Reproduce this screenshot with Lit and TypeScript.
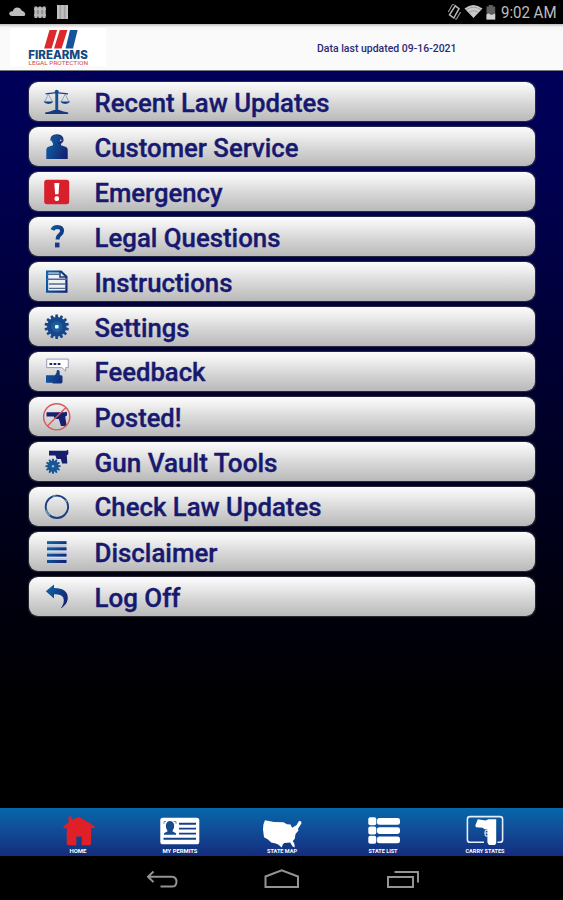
import { LitElement, html, svg, css, TemplateResult } from "lit";
import { customElement } from "lit/decorators.js";
import { classMap } from "lit/directives/class-map.js";

/** Polygon points of a cog centred on (cx, cy). */
const cog = (cx: number, cy: number, outer: number, inner: number, teeth: number) => {
  const pts: string[] = [];
  for (let i = 0; i < teeth; i++) {
    const step = (Math.PI * 2) / teeth;
    const a = i * step - Math.PI / 2;
    for (const [r, d] of [[inner, -0.36], [outer, -0.22], [outer, 0.22], [inner, 0.36]]) {
      pts.push(`${(cx + r * Math.cos(a + d * step)).toFixed(2)},${(cy + r * Math.sin(a + d * step)).toFixed(2)}`);
    }
  }
  return pts.join(" ");
};

const grad = svg`<defs><linearGradient id="g" gradientUnits="userSpaceOnUse" x1="4" y1="14" x2="27" y2="24">
  <stop offset="0" stop-color="#0d62a6"/><stop offset="1" stop-color="#15206f"/></linearGradient></defs>`;

// Every row icon is drawn on a 30 x 39 grid, the full height of its row.
const rows: { label: string; raised?: boolean; width: number; icon: TemplateResult<2> }[] = [
  { label: "Recent Law Updates", width: 235, icon: svg`
    <path d="M3.600 11.800 L8 11.300 14.600 10.600 21 11.300 26 11.800" fill="none" stroke="#14418a" stroke-width="1.300"/>
    <rect x="13.300" y="9" width="2.900" height="21" fill="#17508f"/><circle cx="14.700" cy="9.600" r="1.900" fill="#174a8d"/>
    <path d="M6.400 12 2.500 20M6.400 12 10.400 20M23.200 12 19.200 20M23.200 12 27 20" stroke="#6f8fb8" stroke-width=".7"/>
    <path d="M1.500 19.600h10q-1.500 2.400-5 2.400t-5-2.400zM18.200 19.600h10q-1.500 2.400-5 2.400t-5-2.400z" fill="#14418a"/>
    <path d="M3.200 32v-1.600q5-.5 9-2.400h5q4 1.900 9 2.400V32z" fill="#16397f"/>` },
  { label: "Customer Service", width: 204, icon: svg`
    <path d="M4.300 32V23q0-2.800 3-3.500l3.700-1.200V16.500q-1.800-2-1.800-4.500Q9.500 8.300 15 8.300t5.800 3.700q0 2.500-1.800 4.500v1.800l3.700 1.200q3 .7 3 3.500V32z" fill="url(#g)"/>
    <path d="M9 13.600q-.5-5.600 6-5.700 6.300.2 6 5.700l-1.400 2.200-3.800.6" fill="none" stroke="#142a70" stroke-width="1.200"/>
    <circle cx="18.700" cy="13.300" r=".9" fill="#d7a0b4"/>` },
  { label: "Emergency", width: 128, icon: svg`
    <rect x="2.200" y="7.700" width="25" height="24.600" rx="2.800" fill="#d8202c"/>
    <path d="M12.300 11h5l-.8 11.300h-3.400z" fill="#fff"/><rect x="12.600" y="24.300" width="4.400" height="4.600" rx="1.600" fill="#fff"/>` },
  { label: "Legal Questions", width: 186, icon: svg`
    <path d="M10.400 12.900q1.200-3 5-3 4.700.2 4.700 3.900 0 2.300-2.500 4.200-2 1.500-2 4.600" fill="none" stroke="url(#g)" stroke-width="4"/>
    <rect x="13" y="25.600" width="4.500" height="4.800" fill="#17378b"/>` },
  { label: "Instructions", width: 138, icon: svg`
    <path d="M5.100 9.500H19l5.400 5.300v14.800H5.100z" fill="#eef0f4" stroke="url(#g)" stroke-width="2.200"/>
    <path d="M18 9v6h7" fill="none" stroke="#183678" stroke-width="1.500"/>
    <path d="M5 12.200h12M5 17.200h20M7 22h16M7 26.400h16" stroke="#526993" stroke-width="1.400"/>` },
  { label: "Settings", width: 95, icon: svg`
    <polygon points=${cog(14.700, 19.700, 12.300, 9.600, 14)} fill="#17478a"/>
    <circle cx="14.700" cy="19.700" r="5.500" fill="#195f9f"/><rect x="13" y="18" width="3.600" height="3.600" rx=".8" fill="#f3f3f3"/>` },
  { label: "Feedback", raised: true, width: 111, icon: svg`
    <path d="M4.700 7.100h21.600v8.500h-2.600v3.600l-3.800-3.600H4.700z" fill="#fff" stroke="#8b91ad" stroke-width=".9"/>
    <path d="M7.500 12h12" stroke="#1b2470" stroke-width="2.200" stroke-dasharray="2.700 1.400"/>
    <path d="M4 23.300h9q1.800-1.600 2-5.300 2.700-.5 2.700 1.700v3.600h1.500q1.300.3 1.300 1.500v5q0 1.700-1.700 1.700H11l-1-.8H4z" fill="url(#g)"/>` },
  { label: "Posted!", width: 87, icon: svg`
    <path d="M4.500 15.200h18.500l1-.8 1 1v3l-1.800 1.200 1.300 8.300-1 1H19l-2.200-7h-4l-1-2.400H4.500z" fill="#17216f"/>
    <circle cx="14.700" cy="19.800" r="13.100" fill="none" stroke="#d8585b" stroke-width="1.400"/>
    <path d="M23.700 10.800 5.500 29" stroke="#d8585b" stroke-width="1.300"/>` },
  { label: "Gun Vault Tools", width: 183, icon: svg`
    <path d="M7 8.800h17.500l1-1 .8 1v3.500l-1.500 1 .5 8.200h-5.200l-1.300-4.500h-4l-1.500-3.500H7z" fill="#171e6c"/>
    <polygon points=${cog(11, 24.200, 7.600, 5.600, 12)} fill="#175694"/>
    <circle cx="11" cy="24.200" r="1.200" fill="#9db9d3"/>` },
  { label: "Check Law Updates", raised: true, width: 227, icon: svg`
    <circle cx="14.900" cy="19.800" r="11.200" fill="none" stroke="#1b3d82" stroke-width="1.900"/>
    <path d="M4.200 22.700q1 3.700 3.700 5.700M23.600 12.800l1.500 2M10.800 9.400l2.800-.8" fill="none" stroke="#5f92b5" stroke-width="1.900"/>` },
  { label: "Disclaimer", width: 123, icon: svg`
    <rect x="5" y="9" width="19.500" height="22" fill="#bcc6dc"/>
    <path d="M5 12.700h19.500M5 19h19.500M5 25.300h19.500" stroke="#e4e7ef" stroke-width="1"/>
    <g fill="url(#g)"><rect x="5" y="9.200" width="19.500" height="2.900"/><rect x="5" y="15.400" width="19.500" height="2.900"/><rect x="5" y="21.700" width="19.500" height="2.900"/><rect x="5" y="28" width="19.500" height="3"/></g>` },
  { label: "Log Off", width: 86, icon: svg`
    <path d="M3.800 14.200 12 7.500v3.600q14.200.2 13.800 10.600Q25 28 18.500 31.400q4.800-6 2.700-11Q18.800 17 12 17.300v4.200z" fill="url(#g)"/>` },
];

// Tab icons share a 50 x 48 grid, the full height of the tab bar.
const tabs: { label: string; width: number; icon: TemplateResult<2> }[] = [
  { label: "HOME", width: 17, icon: svg`
    <path d="M15.500 14.600V8.500h3.200v3.300L24.500 9.500q1.500-.6 3 0l14.200 8.800-.6 1.600-3 .2v15.200q0 2-2 2h-7.400v-8.800h-5.400v8.800h-7.600q-2 0-2-2V20.300l-3-.2-.5-1.600z" fill="#df2029"/>` },
  { label: "MY PERMITS", width: 35, icon: svg`
    <rect x="5.300" y="9.700" width="39" height="26.600" rx="2.600" fill="#fff"/>
    <path d="M24 15.700h17M24 20.600h17M24 25.600h17M8.500 30.700H41" stroke="#163f8b" stroke-width="1.900"/>
    <path d="M9 26.800v-1.500l3.600-2-1.600-3.500q-1-6.600 4-6.900 5 .3 4 6.900l-1.600 3.500 3.600 2v1.500z" fill="#174b91"/>
    <path d="M9 16v-2.500h2M18.500 13.500h2.500V16" fill="none" stroke="#174b91" stroke-width=".6"/>` },
  { label: "STATE MAP", width: 30, icon: svg`
    <path d="M8 12.300 17 14l9.500.3 3.500 2 3.500.2 1.600 3.200 4.300-2.500 2.600-4.300 2 .4.500 2-3.600 5.800.6 1.500-3 3.500-.7 4.600-2 2.200 1.600 2.900.3 3.600-2.300-1.200-2.200-3.700-5.700.4-1.500 1.200-1.300 3.500-3.500-3-2.500-1.200-4.500-1-3.200-2.800-4-2.400L6 21.500l.4-5z" fill="#fff"/>` },
  { label: "STATE LIST", width: 29, icon: svg`
    <g fill="#fff"><rect x="10.300" y="9.200" width="8" height="8" rx="2"/><rect x="10.300" y="18.500" width="8" height="8" rx="2"/><rect x="10.300" y="27.700" width="8" height="8" rx="2"/>
    <rect x="19" y="10" width="23" height="6.800" rx="2.400"/><rect x="19" y="19.200" width="23" height="6.800" rx="2.400"/><rect x="19" y="28.500" width="23" height="6.800" rx="2.400"/></g>` },
  { label: "CARRY STATES", width: 39, icon: svg`
    <path d="M24 34.300H10q-2.600 0-2.600-2.600V11.200q0-2.600 2.600-2.600h30q2.600 0 2.600 2.600v20.500q0 2.600-2.600 2.600h-2.500" fill="none" stroke="#e6eef9" stroke-width="1.600"/>
    <path d="M17.800 11.300l7.700 1.200 3-1.200h7.700v24l-1.300 1.700h-6l-1.500-2.500V21.500l-3.500-.5-1-1.300-6.900-.5-.7-1.700z" fill="#fff"/>
    <path d="M28 22.300h-2.600q-1 2.500 0 5.700H28M25 25h3" fill="none" stroke="#fff" stroke-width="1"/>` },
];

@customElement("app-root")
export class AppRoot extends LitElement {
  static styles = css`
    :host { display: block; font-family: Roboto, "Liberation Sans", sans-serif; }
    svg { display: block; flex: none; }
    .screen { width: 563px; height: 900px; display: flex; flex-direction: column; background: #000; overflow: hidden; }
    .status { height: 24px; flex: none; display: flex; justify-content: space-between; align-items: center; }
    .clock { display: flex; align-items: center; padding-right: 2px; }
    .header { height: 47px; flex: none; display: flex; align-items: center; box-sizing: border-box;
      background: linear-gradient(#bdbdbd 0, #f4f4f4 3px, #fafafa 8px); border-bottom: 1px solid #77777f; }
    .main { flex: 1; padding: 10.500px 28px 0 28.500px; background: linear-gradient(#00005a 0, #000052 100px, #000036 270px, #00001c 440px, #00000a 560px, #000 660px); }
    .list { display: flex; flex-direction: column; gap: 6px; }
    .row { height: 39px; box-sizing: border-box; border-radius: 9px; display: flex; padding-left: 13.500px; gap: 22.500px;
      background: linear-gradient(#fcfcfc 0, #eeeeee 22%, #d3d3d4 60%, #b9b9ba 100%);
      box-shadow: 0 0 1px .5px rgba(60, 62, 66, .7); }
    .tabs { height: 48px; flex: none; display: flex; padding: 0 27px 0 27.500px; background: linear-gradient(#0667a8, #10509a 40%, #152c7d 100%); }
    .tab { flex: 1; display: flex; justify-content: center; }
    .nav { height: 44px; flex: none; display: flex; justify-content: center; }
    .caption { font: 700 5.500px Roboto, sans-serif; fill: #fff; }
    .label { font: 500 25px Roboto, sans-serif; fill: #17196f; stroke: #17196f; stroke-width: .35px; }
    .time { font: 400 17px Roboto, sans-serif; fill: #bdbdbd; }
    .updated { font: 500 10px Roboto, sans-serif; fill: #2a2a74; }
    .brand { font: 800 11.500px Inter, Roboto, sans-serif; fill: #17487f; }
    .tagline { font: 400 5.200px Roboto, sans-serif; fill: #d0454d; }
    .raised .label { transform: translateY(-1.300px); }
  `;

  render() {
    return html`<div class="screen">
      <div class="status">
        <svg width="80" height="24" fill="#bebebe">
          <path d="M12 16q-3-.5-2.800-3 1.300-2.200 3.300-1.600Q14 7.300 17.500 7.400q3 .2 4.200 3 3.300 1 3.600 4.300-.3 1.300-1.800 1.300z"/>
          <path d="M34.500 7h11v10.500h-11z" fill="#8c8c8c"/>
          <path d="M35.700 6.500v11.500M40 6.500v11.500M44.300 6.500v11.500" stroke="#b8b8b8" stroke-width="2.400"/>
          <path d="M34 9.200h12M34 15h12" stroke="#bdbdbd" stroke-width="1.500"/>
          <path d="M57 5h11v14H57z" fill="#a2a2a2"/><path d="M58.200 5v14M62.500 5v14M66.800 5v14" stroke="#c2c2c2" stroke-width="2.400"/>
        </svg>
        <div class="clock"><svg width="122" height="24">
          <g transform="translate(4 0)"><path d="M12.300 5.800 16 8.700 10.800 18 6.500 14.800z" fill="none" stroke="#b9b9b9" stroke-width="1.500"/>
          <path d="M11.500 4.700H9.300L5.300 12M12 19h1.500L17.600 12" fill="none" stroke="#999" stroke-width="1.100"/></g>
          <path d="M25.500 8.500q8.800-7 18 0L34.500 18z" fill="#c8c8c8"/><path d="M27.300 9.700q7.200-5 14.400 0M30 12.400q4.500-3.200 9 0" fill="none" stroke="#8a8a8a" stroke-width=".7"/>
          <path d="M47.500 6.500h2.300V5h4v1.500h2.400v13h-8.700z" fill="#606060"/><path d="M47.500 14.500l2-1 3 1.500 3.700-1.500v6h-8.700z" fill="#d2d2d2"/>
          <text class="time" x="62" y="18" textLength="55.500" lengthAdjust="spacingAndGlyphs">9:02 AM</text></svg></div>
      </div>
      <div class="header">
        <svg width="563" height="46">
          <rect x="10" y="4" width="96" height="38" fill="#fff"/>
          <path d="M49.500 6h7.600l-5.500 18.500h-7.500zM59.800 6h7.600l-5.800 18.500H54z" fill="#dc2a2c"/>
          <path d="M70 6h7.600l-4.600 18.500h-7.500z" fill="#15539b"/>
          <text class="brand" x="28.300" y="35.300" textLength="59.500" lengthAdjust="spacingAndGlyphs">FIREARMS</text>
          <text class="tagline" x="28.500" y="41" textLength="59.500" lengthAdjust="spacingAndGlyphs">LEGAL PROTECTION</text>
          <text class="updated" x="317" y="27.600" textLength="139.500" lengthAdjust="spacingAndGlyphs">Data last updated 09-16-2021</text>
        </svg>
      </div>
      <div class="main"><div class="list">${rows.map((r) => html`
        <div class=${classMap({ row: true, raised: !!r.raised })}>
          <svg width="30" height="39">${grad}${r.icon}</svg>
          <svg width="260" height="39"><text class="label" x="-.5" y="30" textLength=${r.width} lengthAdjust="spacingAndGlyphs">${r.label}</text></svg>
        </div>`)}</div></div>
      <div class="tabs">${tabs.map((t) => html`
        <div class="tab"><svg width="50" height="48">${t.icon}
          <text class="caption" x=${25 - t.width / 2} y="45.200" textLength=${t.width} lengthAdjust="spacingAndGlyphs">${t.label}</text></svg></div>`)}</div>
      <div class="nav"><svg width="563" height="44" fill="none" stroke="#949494" stroke-width="2">
        <path d="M153.500 15.500 148 20.800l5.500 5.300M148.500 20.800H172q4.500.4 4.500 4.900-.2 4.900-4.500 4.900h-11.500"/>
        <path d="M265.500 31V20.500L281.700 14.300 298 20.500V31z"/>
        <path d="M388 21h25v10h-25zM394.500 16h23.500v10.500"/>
      </svg></div>
    </div>`;
  }
}
